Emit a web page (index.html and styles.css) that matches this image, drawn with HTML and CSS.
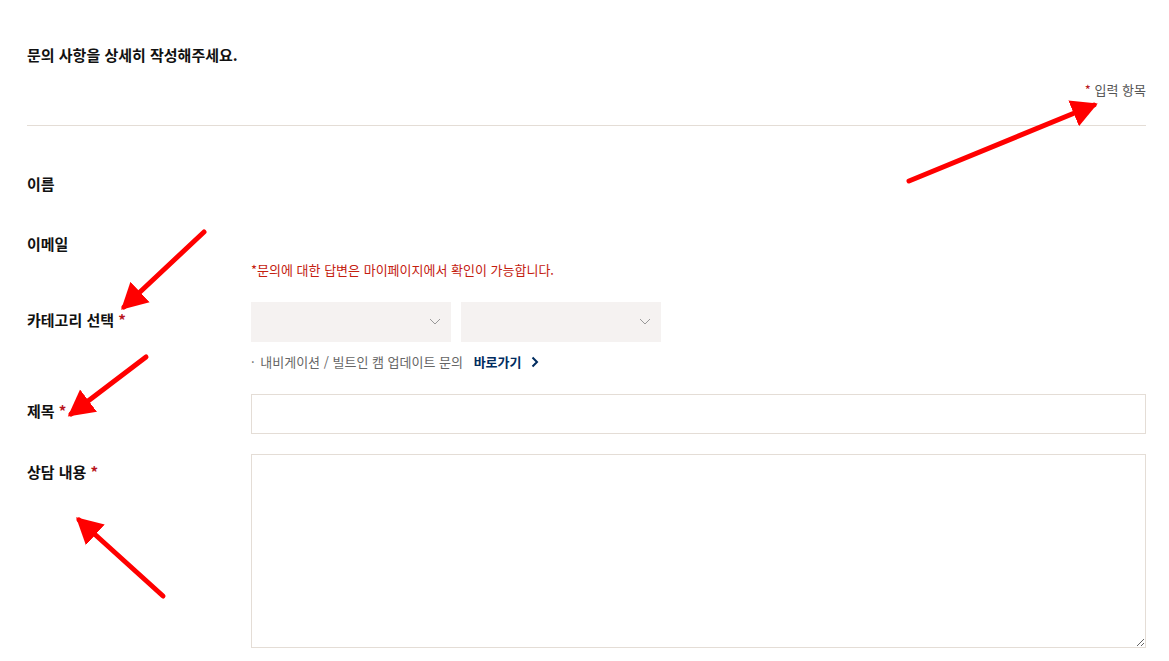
FILE: index.html
```html
<!DOCTYPE html>
<html lang="ko">
<head>
    <meta charset="UTF-8">
    <meta name="viewport" content="width=device-width, initial-scale=1.0">
    <title>1:1 문의</title>
    <link rel="stylesheet" href="styles.css">
</head>
<body>
    <div class="inquiry">
        <div class="inquiry-head">
            <h2>문의 사항을 상세히 작성해주세요.</h2>
            <p class="required-guide"><span class="star">*</span> 입력 항목</p>
        </div>

        <form class="inquiry-form">
            <div class="form-row row-name">
                <div class="form-label">이름</div>
                <div class="form-field"></div>
            </div>

            <div class="form-row row-email">
                <div class="form-label">이메일</div>
                <div class="form-field">
                    <p class="answer-notice">*문의에 대한 답변은 마이페이지에서 확인이 가능합니다.</p>
                </div>
            </div>

            <div class="form-row row-category">
                <label class="form-label">카테고리 선택 <span class="star">*</span></label>
                <div class="form-field">
                    <div class="select-group">
                        <div class="select-box">
                            <select></select>
                            <svg class="select-arrow" width="12" height="8" viewBox="0 0 12 8"><path d="M1 1l5 5 5-5" fill="none" stroke="#999" stroke-width="1"/></svg>
                        </div>
                        <div class="select-box">
                            <select></select>
                            <svg class="select-arrow" width="12" height="8" viewBox="0 0 12 8"><path d="M1 1l5 5 5-5" fill="none" stroke="#999" stroke-width="1"/></svg>
                        </div>
                    </div>
                    <p class="update-link">
                        <span class="dot">·</span> 내비게이션 / 빌트인 캠 업데이트 문의
                        <a href="#">바로가기
                            <svg width="8" height="12" viewBox="0 0 8 12"><path d="M1.5 1.5l4.5 4.5-4.5 4.5" fill="none" stroke="#002c5f" stroke-width="2"/></svg>
                        </a>
                    </p>
                </div>
            </div>

            <div class="form-row row-title">
                <label class="form-label" for="title">제목 <span class="star">*</span></label>
                <div class="form-field">
                    <input type="text" id="title" class="text-input">
                </div>
            </div>

            <div class="form-row row-content">
                <label class="form-label" for="content">상담 내용 <span class="star">*</span></label>
                <div class="form-field">
                    <textarea id="content" class="text-area"></textarea>
                </div>
            </div>
        </form>
    </div>

    <!-- 주석 화살표 -->
    <svg class="annotations" width="1169" height="661" viewBox="0 0 1169 661">
        <defs>
            <marker id="head" markerUnits="userSpaceOnUse" markerWidth="30" markerHeight="30" refX="22" refY="15" orient="auto">
                <path d="M0 1 L26 15 L0 29 Z" fill="#ff0000"/>
            </marker>
        </defs>
        <g stroke="#ff0000" stroke-width="5" stroke-linecap="round" fill="none">
            <line x1="909" y1="181" x2="1094" y2="105" marker-end="url(#head)"/>
            <line x1="204" y1="232" x2="124" y2="307" marker-end="url(#head)"/>
            <line x1="146" y1="357" x2="71" y2="414" marker-end="url(#head)"/>
            <line x1="163" y1="596" x2="79" y2="520" marker-end="url(#head)"/>
        </g>
    </svg>
</body>
</html>
```

FILE: styles.css
```css
* {
    margin: 0;
    padding: 0;
    box-sizing: border-box;
}

body {
    font-family: 'Noto Sans CJK KR', 'Noto Sans', sans-serif;
    background: white;
    color: #111;
    position: relative;
}

.inquiry {
    padding: 44px 23px 0 27px;
}

.inquiry-head h2 {
    font-size: 15px;
    font-weight: 700;
    line-height: 22px;
}

.required-guide {
    text-align: right;
    font-size: 13px;
    line-height: 18px;
    color: #555;
    margin-top: 15px;
    padding-bottom: 26px;
    border-bottom: 1px solid #e4ddd6;
}

.star {
    color: #b8141c;
}

.form-row {
    display: grid;
    grid-template-columns: 224px 1fr;
}

.form-label {
    font-size: 15px;
    font-weight: 700;
    line-height: 20px;
}

.row-name {
    margin-top: 48px;
}

.row-email {
    margin-top: 40px;
}

.answer-notice {
    margin-top: 26px;
    font-size: 13px;
    line-height: 20px;
    color: #c4200f;
}

.row-category {
    margin-top: 22px;
}

.row-category .form-label {
    padding-top: 8px;
}

.select-group {
    display: flex;
    gap: 10px;
}

.select-box {
    position: relative;
    width: 200px;
    height: 40px;
}

.select-box select {
    width: 100%;
    height: 100%;
    border: none;
    background: #f5f2f1;
    appearance: none;
    -webkit-appearance: none;
    outline: none;
}

.select-arrow {
    position: absolute;
    right: 10px;
    top: 16px;
    pointer-events: none;
}

.update-link {
    margin-top: 10px;
    font-size: 13px;
    line-height: 20px;
    color: #666;
}

.update-link .dot {
    margin-right: 2px;
}

.update-link a {
    margin-left: 7px;
    color: #002c5f;
    font-weight: 700;
    text-decoration: none;
}

.update-link a svg {
    margin-left: 6px;
    vertical-align: -1px;
}

.row-title {
    margin-top: 22px;
}

.row-title .form-label {
    padding-top: 7px;
}

.text-input {
    width: 100%;
    height: 40px;
    border: 1px solid #e4ddd6;
    outline: none;
}

.row-content {
    margin-top: 20px;
}

.row-content .form-label {
    padding-top: 8px;
}

.text-area {
    display: block;
    width: 100%;
    height: 194px;
    border: 1px solid #e4ddd6;
    outline: none;
}

.annotations {
    position: absolute;
    left: 0;
    top: 0;
    pointer-events: none;
}
```
